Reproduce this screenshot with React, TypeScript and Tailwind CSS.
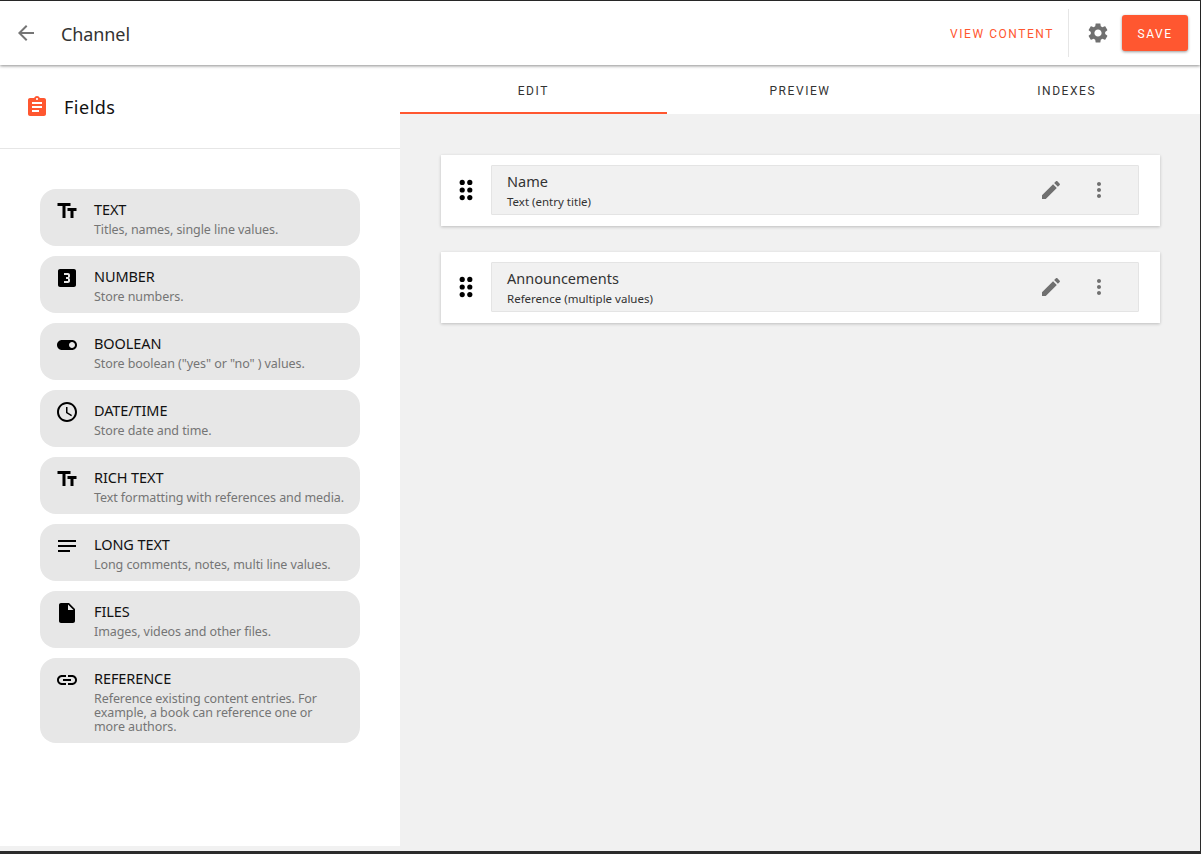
import type { ReactNode } from "react";

const sans = "font-['Noto_Sans',sans-serif]";
const roboto = "font-['Roboto',sans-serif]";

const Icon = ({ d, className }: { d: string; className: string }) => (
  <svg viewBox="0 0 24 24" fill="currentColor" className={className}>
    <path d={d} />
  </svg>
);

const paths = {
  back: "M20 11H7.83l5.59-5.59L12 4l-8 8 8 8 1.41-1.41L7.83 13H20v-2z",
  settings:
    "M19.14 12.94c.04-.3.06-.61.06-.94 0-.32-.02-.64-.07-.94l2.03-1.58c.18-.14.23-.41.12-.61l-1.92-3.32c-.12-.22-.37-.29-.59-.22l-2.39.96c-.5-.38-1.03-.7-1.62-.94l-.36-2.54c-.04-.24-.24-.41-.48-.41h-3.84c-.24 0-.43.17-.47.41l-.36 2.54c-.59.24-1.13.57-1.62.94l-2.39-.96c-.22-.08-.47 0-.59.22L2.74 8.87c-.12.21-.08.47.12.61l2.03 1.58c-.05.3-.09.63-.09.94s.02.64.07.94l-2.03 1.58c-.18.14-.23.41-.12.61l1.92 3.32c.12.22.37.29.59.22l2.39-.96c.5.38 1.03.7 1.62.94l.36 2.54c.05.24.24.41.48.41h3.84c.24 0 .44-.17.47-.41l.36-2.54c.59-.24 1.13-.56 1.62-.94l2.39.96c.22.08.47 0 .59-.22l1.92-3.32c.12-.22.07-.47-.12-.61l-2.01-1.58zM12 15.6c-1.98 0-3.6-1.62-3.6-3.6s1.62-3.6 3.6-3.6 3.6 1.62 3.6 3.6-1.62 3.6-3.6 3.6z",
  assignment:
    "M19 3h-4.18C14.4 1.84 13.3 1 12 1c-1.3 0-2.4.84-2.82 2H5c-1.1 0-2 .9-2 2v14c0 1.1.9 2 2 2h14c1.1 0 2-.9 2-2V5c0-1.1-.9-2-2-2zm-7 0c.55 0 1 .45 1 1s-.45 1-1 1-1-.45-1-1 .45-1 1-1zm2 14H7v-2h7v2zm3-4H7v-2h10v2zm0-4H7V7h10v2z",
  text: "M2.5 4v3h5v12h3V7h5V4h-13zm19 5h-9v3h3v7h3v-7h3V9z",
  number:
    "M19 3H5c-1.1 0-2 .9-2 2v14c0 1.1.9 2 2 2h14c1.1 0 2-.9 2-2V5c0-1.1-.9-2-2-2zm-4 7.5c0 .83-.67 1.5-1.5 1.5.83 0 1.5.67 1.5 1.5V15c0 1.11-.9 2-2 2H9v-2h4v-2h-2v-2h2V9H9V7h4c1.1 0 2 .89 2 2v1.5z",
  toggle:
    "M17 7H7c-2.76 0-5 2.24-5 5s2.24 5 5 5h10c2.76 0 5-2.24 5-5s-2.24-5-5-5zm0 8c-1.66 0-3-1.34-3-3s1.34-3 3-3 3 1.34 3 3-1.34 3-3 3z",
  clock:
    "M11.99 2C6.47 2 2 6.48 2 12s4.47 10 9.99 10C17.52 22 22 17.52 22 12S17.52 2 11.99 2zM12 20c-4.42 0-8-3.58-8-8s3.58-8 8-8 8 3.58 8 8-3.58 8-8 8zm.5-13H11v6l5.25 3.15.75-1.23-4.5-2.67z",
  notes: "M3 18h12v-2H3v2zM3 6v2h18V6H3zm0 7h18v-2H3v2z",
  file: "M6 2c-1.1 0-1.99.9-1.99 2L4 20c0 1.1.89 2 1.99 2H18c1.1 0 2-.9 2-2V8l-6-6H6zm7 7V3.5L18.5 9H13z",
  link: "M3.9 12c0-1.71 1.39-3.1 3.1-3.1h4V7H7c-2.76 0-5 2.24-5 5s2.24 5 5 5h4v-1.9H7c-1.71 0-3.1-1.39-3.1-3.1zM8 13h8v-2H8v2zm9-6h-4v1.9h4c1.71 0 3.1 1.39 3.1 3.1s-1.39 3.1-3.1 3.1h-4V17h4c2.76 0 5-2.24 5-5s-2.24-5-5-5z",
  edit: "M3 17.25V21h3.75L17.81 9.94l-3.75-3.75L3 17.25zM20.71 7.04c.39-.39.39-1.02 0-1.41l-2.34-2.34c-.39-.39-1.02-.39-1.41 0l-1.83 1.83 3.75 3.75 1.83-1.83z",
  more: "M12 8c1.1 0 2-.9 2-2s-.9-2-2-2-2 .9-2 2 .9 2 2 2zm0 2c-1.1 0-2 .9-2 2s.9 2 2 2 2-.9 2-2-.9-2-2-2zm0 6c-1.1 0-2 .9-2 2s.9 2 2 2 2-.9 2-2-.9-2-2-2z",
};

const fieldTypes = [
  { icon: paths.text, title: "TEXT", desc: "Titles, names, single line values." },
  { icon: paths.number, title: "NUMBER", desc: "Store numbers." },
  { icon: paths.toggle, title: "BOOLEAN", desc: 'Store boolean ("yes" or "no" ) values.' },
  { icon: paths.clock, title: "DATE/TIME", desc: "Store date and time." },
  { icon: paths.text, title: "RICH TEXT", desc: "Text formatting with references and media." },
  { icon: paths.notes, title: "LONG TEXT", desc: "Long comments, notes, multi line values." },
  { icon: paths.file, title: "FILES", desc: "Images, videos and other files." },
  {
    icon: paths.link,
    title: "REFERENCE",
    desc: "Reference existing content entries. For example, a book can reference one or more authors.",
  },
];

const contentFields = [
  { name: "Name", type: "Text (entry title)" },
  { name: "Announcements", type: "Reference (multiple values)" },
];

const Tab = ({ active, children }: { active?: boolean; children: ReactNode }) => (
  <div
    className={`flex-1 h-[49px] pt-1 border-b-2 flex items-center justify-center text-xs tracking-[1.55px] text-[#333] ${roboto} ${
      active ? "border-[#ff5730]" : "border-transparent"
    }`}
  >
    {children}
  </div>
);

// drag handle, six round dots
const DragDots = () => (
  <svg viewBox="0 0 14 22" fill="black" className="w-[14px] h-[22px]">
    {[3.4, 11, 18.6].map((cy) => (
      <g key={cy}>
        <circle cx="3.2" cy={cy} r="2.6" />
        <circle cx="10.8" cy={cy} r="2.6" />
      </g>
    ))}
  </svg>
);

export default function App() {
  return (
    <div className={`h-[854px] w-full bg-[#2b2b2b] pt-px pr-px pb-[3px] overflow-hidden ${sans}`}>
      <div className="h-full bg-[#f1f1f1] pb-[5px] flex flex-col relative">
        {/* top bar */}
        <header className="relative z-10 h-16 shrink-0 bg-white flex items-center shadow-[0_1px_3px_rgba(0,0,0,0.45)]">
          <Icon d={paths.back} className="w-6 h-6 ml-[14px] text-[#757575]" />
          <span className="ml-[23px] mt-[3px] text-[18px] text-[#333] tracking-[-0.1px]">Channel</span>
          <div className="ml-auto flex items-center h-full">
            <span className={`mt-[2px] text-xs tracking-[1.55px] text-[#ff5730] ${roboto}`}>VIEW CONTENT</span>
            <div className="w-px h-12 bg-[#e6e6e6] ml-[14px]" />
            <Icon d={paths.settings} className="w-6 h-6 ml-[17px] text-[#707070]" />
            <button
              className={`ml-[12px] mr-3 w-[66px] h-9 pt-px rounded-[3px] bg-[#ff5730] text-white text-xs tracking-[1.5px] shadow-[0_1px_3px_rgba(0,0,0,0.4)] ${roboto}`}
            >
              SAVE
            </button>
          </div>
        </header>

        <div className="flex flex-1 min-h-0">
          {/* field types */}
          <aside className="w-[400px] shrink-0 bg-white">
            <div className="h-[84px] border-b border-[#e6e6e6] flex items-center pl-[25px]">
              <Icon d={paths.assignment} className="w-6 h-6 text-[#ff5730]" />
              <span className="ml-[15px] mt-[2px] text-[18px] text-[#111] tracking-[0.5px]">Fields</span>
            </div>
            <div className="px-10 pt-10 flex flex-col gap-[10px]">
              {fieldTypes.map((f) => (
                <div key={f.title} className="min-h-[57px] rounded-2xl bg-[#e7e7e7] flex pl-[15px] pr-[14px] pt-2 pb-[9px]">
                  <Icon d={f.icon} className="w-6 h-6 mt-[2px] shrink-0 text-black" />
                  <div className="ml-[15px] min-w-0">
                    <div className="text-[14.5px] leading-6 text-[#111] tracking-[-0.1px]">{f.title}</div>
                    <div className="mt-[2px] text-[12.5px] leading-[14px] tracking-[-0.08px] text-[#757575]">{f.desc}</div>
                  </div>
                </div>
              ))}
            </div>
          </aside>

          {/* main column */}
          <main className="flex-1 min-w-0">
            <div className="flex bg-white">
              <Tab active>EDIT</Tab>
              <Tab>PREVIEW</Tab>
              <Tab>INDEXES</Tab>
            </div>
            <div className="pt-[41px] pl-[41px] pr-10 flex flex-col gap-[26px]">
              {contentFields.map((f) => (
                <div key={f.name} className="h-[71px] bg-white flex items-start pt-[10px] shadow-[0_1px_3px_rgba(0,0,0,0.22)]">
                  <div className="w-[50px] h-[50px] shrink-0 flex items-center justify-center">
                    <DragDots />
                  </div>
                  <div className="flex-1 mr-[21px] h-[50px] bg-[#f1f1f1] border border-[#e4e4e4] rounded-[1px] flex items-center pl-[15px]">
                    <div className="flex-1 min-w-0">
                      <div className="text-[14.5px] leading-[20px] text-[#333]">{f.name}</div>
                      <div className="text-[11.5px] leading-[16px] text-[#333] mt-[3px]">{f.type}</div>
                    </div>
                    <Icon d={paths.edit} className="w-6 h-6 text-[#707070]" />
                    <Icon d={paths.more} className="w-6 h-6 ml-6 mr-[27px] text-[#707070]" />
                  </div>
                </div>
              ))}
            </div>
          </main>
        </div>
      </div>
    </div>
  );
}
